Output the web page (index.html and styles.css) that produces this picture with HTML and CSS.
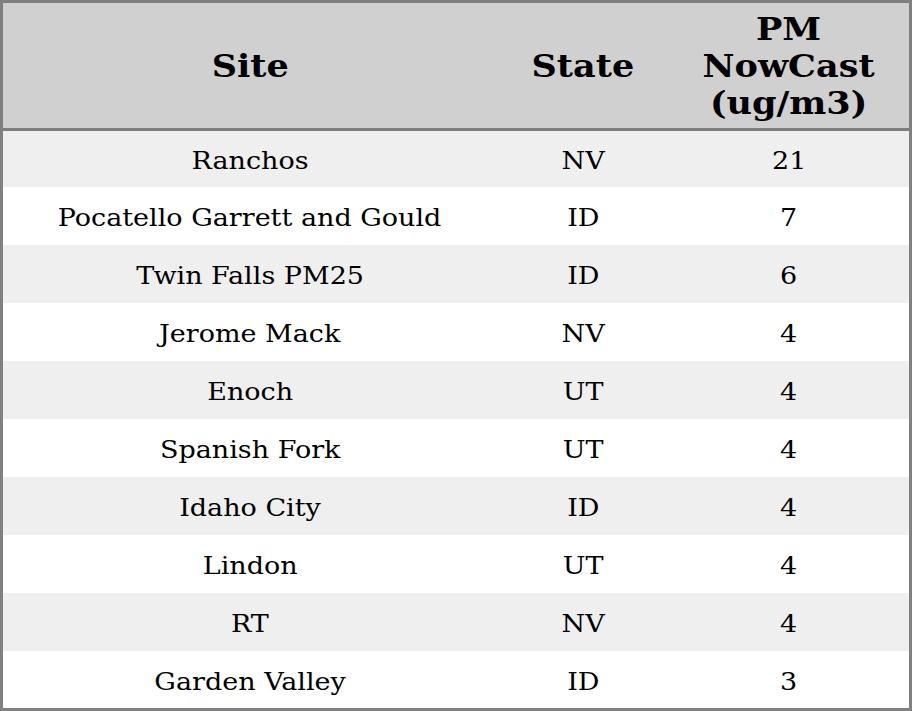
FILE: index.html
```html
<!DOCTYPE html>
<html>
<head>
<meta charset="utf-8">
<link rel="stylesheet" href="styles.css">
</head>
<body>
<table class="aq">
  <colgroup>
    <col class="c-site">
    <col class="c-state">
    <col class="c-pm">
  </colgroup>
  <thead>
    <tr class="head">
      <th><span class="wide">Site</span></th>
      <th><span class="wide">State</span></th>
      <th><span class="wide">PM<br>NowCast<br>(ug/m3)</span></th>
    </tr>
  </thead>
  <tbody>
    <tr><td><span class="wide">Ranchos</span></td><td><span class="wide">NV</span></td><td><span class="wide">21</span></td></tr>
    <tr><td><span class="wide">Pocatello Garrett and Gould</span></td><td><span class="wide">ID</span></td><td><span class="wide">7</span></td></tr>
    <tr><td><span class="wide">Twin Falls PM25</span></td><td><span class="wide">ID</span></td><td><span class="wide">6</span></td></tr>
    <tr><td><span class="wide">Jerome Mack</span></td><td><span class="wide">NV</span></td><td><span class="wide">4</span></td></tr>
    <tr><td><span class="wide">Enoch</span></td><td><span class="wide">UT</span></td><td><span class="wide">4</span></td></tr>
    <tr><td><span class="wide">Spanish Fork</span></td><td><span class="wide">UT</span></td><td><span class="wide">4</span></td></tr>
    <tr><td><span class="wide">Idaho City</span></td><td><span class="wide">ID</span></td><td><span class="wide">4</span></td></tr>
    <tr><td><span class="wide">Lindon</span></td><td><span class="wide">UT</span></td><td><span class="wide">4</span></td></tr>
    <tr><td><span class="wide">RT</span></td><td><span class="wide">NV</span></td><td><span class="wide">4</span></td></tr>
    <tr><td><span class="wide">Garden Valley</span></td><td><span class="wide">ID</span></td><td><span class="wide">3</span></td></tr>
  </tbody>
</table>
</body>
</html>
```
FILE: styles.css
```css
html, body {
  margin: 0;
  padding: 0;
  background: #ffffff;
}
.aq {
  width: 912px;
  border-collapse: separate;
  border-spacing: 0;
  border: 3px solid #808080;
  table-layout: fixed;
  font-family: "DejaVu Serif", serif;
  color: #000;
}
.c-site { width: 494px; }
.c-state { width: 172px; }
.c-pm { width: 240px; }
.wide {
  display: inline-block;
  transform: scaleX(1.125);
  transform-origin: center;
}
.aq th .wide {
  transform: scaleX(1.095);
}
.aq th {
  background: #d0d0d0;
  font-size: 32px;
  font-weight: bold;
  line-height: 37px;
  height: 125px;
  padding: 2px 0 0 0;
  text-align: center;
  vertical-align: middle;
  border-bottom: 3px solid #808080;
}
.aq td {
  font-size: 24px;
  height: 58px;
  padding: 4px 0 0 0;
  text-align: center;
  vertical-align: middle;
  box-sizing: border-box;
}
.aq th { box-sizing: border-box; height: 128px; }
.aq tbody tr:first-child td { height: 56px; }
.aq tbody tr:last-child td { height: 57px; }
.aq tbody tr:nth-child(odd) td { background: #efefef; }
```
